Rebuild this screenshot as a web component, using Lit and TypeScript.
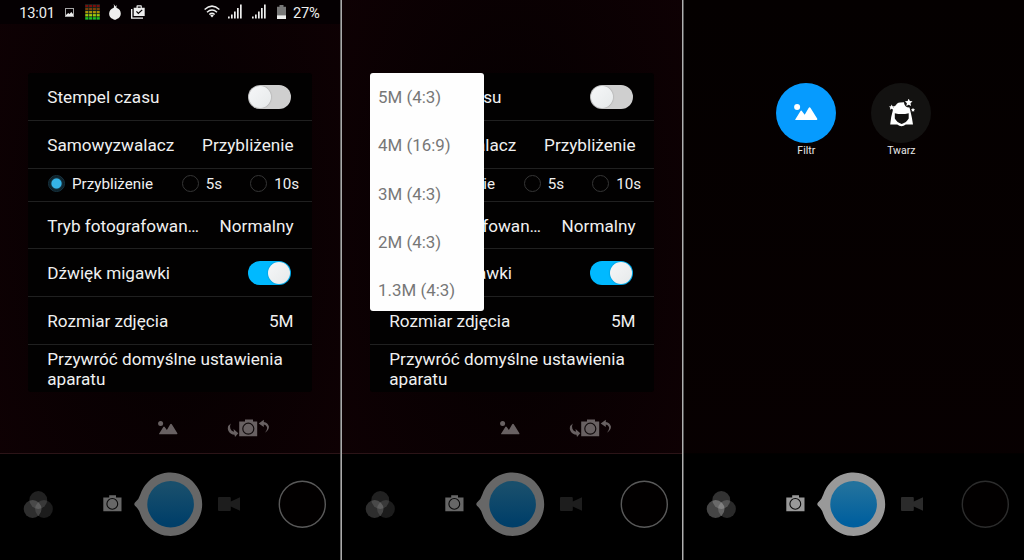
import { LitElement, html, css, svg, nothing } from "lit";
import { customElement, property } from "lit/decorators.js";

const mountain = svg`
  <circle cx="2.6" cy="2.5" r="2.5"></circle>
  <path d="M.9 13.1 5.3 6Q6 5 6.7 6L8.900 9 12.200 3.300Q13 2.200 13.800 3.300L19.400 12.300Q19.600 13.300 18.800 13.300H1.400Z"></path>`;

@customElement("toggle-switch")
class ToggleSwitch extends LitElement {
  @property({ type: Boolean, reflect: true }) on = false;
  static styles = css`
    :host { display: flex; box-sizing: border-box; width: 43px; height: 24px; padding: 1px; border-radius: 12px; background: #cfcfcf; }
    :host([on]) { background: #00b9ff; justify-content: flex-end; }
    .knob { width: 22px; height: 22px; border-radius: 50%; background: linear-gradient(135deg, #f6f7f8, #e6e9ea); box-shadow: 0 0 1.5px #0006; }
  `;
  render() { return html`<div class="knob"></div>`; }
}

@customElement("settings-card")
class SettingsCard extends LitElement {
  static styles = css`
    :host { display: block; }
    .card { width: 284px; border-radius: 3px; background: #020101; color: #f0f0f0; font-size: 17.15px; line-height: 20px; }
    .row { box-sizing: border-box; display: flex; align-items: center; justify-content: space-between; padding: 1px 18.5px 0 19.3px; height: 48px; border-bottom: 1px solid #202020; white-space: nowrap; }
    .short { height: 47px; }
    .radios { height: 33px; padding: 0 13px 3px 20px; justify-content: flex-start; font-size: 15.2px; }
    .last { height: 47px; border: 0; white-space: normal; padding-right: 14px; }
    .sw { padding-right: 21px; }
    .radio { flex: none; box-sizing: border-box; width: 17px; height: 17px; margin-right: 7px; border-radius: 50%; border: 1px solid #353535; }
    .radio.sel { border-color: #173543; background: radial-gradient(circle, #35b4e8 4.6px, #12303d 5.6px, #0c1b22 7.5px); }
    .lab { flex: none; }
    .l1 { width: 109.700px; } .l2 { width: 44.500px; }
  `;
  render() {
    return html`<div class="card">
      <div class="row sw"><span>Stempel czasu</span><toggle-switch></toggle-switch></div>
      <div class="row"><span>Samowyzwalacz</span><span>Przybliżenie</span></div>
      <div class="row radios">
        <i class="radio sel"></i><span class="lab l1">Przybliżenie</span>
        <i class="radio"></i><span class="lab l2">5s</span>
        <i class="radio"></i><span class="lab">10s</span>
      </div>
      <div class="row short"><span>Tryb fotografowan…</span><span>Normalny</span></div>
      <div class="row sw"><span>Dźwięk migawki</span><toggle-switch on></toggle-switch></div>
      <div class="row"><span>Rozmiar zdjęcia</span><span>5M</span></div>
      <div class="row last"><span>Przywróć domyślne ustawienia aparatu</span></div>
    </div>`;
  }
}

@customElement("camera-bar")
class CameraBar extends LitElement {
  @property({ type: Boolean, reflect: true }) lit = false;
  static styles = css`
    :host { display: flex; box-sizing: border-box; height: 107px; background: #000; border-top: 1px solid #2b1417; padding-bottom: 6px; align-items: center;
      --ring: #676767; --top: #194f6c; --bot: #003f69; --cam: #676767; --vid: #1d1d1d; --thumb: #595959; --venn: 1; }
    :host([lit]) { border-color: #020000; --ring: #999; --top: #22729d; --bot: #005f9e; --cam: #999; --vid: #2b2b2b; --thumb: #2c2c2c; --venn: 1.5; }
    svg { display: block; flex: none; }
    .venn { margin-left: 23px; fill: #fff; }
    .v1 { fill-opacity: calc(0.13 * var(--venn)); } .v2 { fill-opacity: calc(0.18 * var(--venn)); } .v3 { fill-opacity: calc(0.11 * var(--venn)); }
    .cam { margin-left: 48.500px; margin-bottom: 1px; fill: var(--cam); }
    .lens { fill: none; stroke: #0a0a0a; stroke-width: 1.1; }
    .shutter { margin-left: 12.500px; }
    .ring { fill: var(--ring); }
    .vid { margin-left: 15px; fill: var(--vid); }
    .thumb { margin-left: 38px; fill: #020000; stroke: var(--thumb); stroke-width: 1.4; }
    .s1 { stop-color: var(--top); } .s2 { stop-color: var(--bot); }
  `;
  render() {
    return html`
      <svg class="venn" width="31" height="28"><circle class="v1" cx="15.3" cy="10" r="8.9"></circle><circle class="v2" cx="9.6" cy="19" r="8.9"></circle><circle class="v3" cx="21" cy="19" r="8.9"></circle></svg>
      <svg class="cam" width="19" height="17"><path d="M.3 2.400H6.200V.2H13V2.400H18.500V16.200H.3Z"></path><circle class="lens" cx="9.300" cy="8.900" r="5.400"></circle></svg>
      <svg class="shutter" width="69" height="64">
        <defs><linearGradient id="g" x1="0" y1="0" x2="0" y2="1"><stop class="s1" offset=".1"></stop><stop class="s2" offset=".9"></stop></linearGradient></defs>
        <g transform="translate(-.6 .2)"><path class="ring" d="M1.600 30.400Q5.600 27 7 22A31.700 31.700 0 1 1 7 42Q5.600 37 1.600 33.600Q.2 32 1.600 30.400Z"></path>
        <circle cx="37.200" cy="32" r="23.300" fill="url(#g)"></circle></g>
      </svg>
      <svg class="vid" width="22" height="14"><path d="M1 0H11.800Q12.800 0 12.800 1V4.600L22 .2V13.800L12.800 9.400V13Q12.800 14 11.800 14H1Q0 14 0 13V1Q0 0 1 0Z"></path></svg>
      <svg class="thumb" width="48" height="48"><circle cx="24.300" cy="24.300" r="23"></circle></svg>`;
  }
}

@customElement("phone-status")
class PhoneStatus extends LitElement {
  static styles = css`
    :host { display: flex; align-items: center; height: 24px; box-sizing: border-box; padding: 0 0 0 19.200px; background: #050002; color: #eee; font-size: 14.700px; line-height: 24px; letter-spacing: -0.2px; }
    svg { display: block; flex: none; fill: #eee; }
    .time { width: 45.800px; padding-top: 1px; } .pct { padding-top: 1px; }
    .pic { margin-right: 11px; } .eq { margin-right: 9px; } .onion { margin-right: 10px; }
    .wifi { margin-left: 59px; margin-right: 8px; margin-bottom: 2px; } .sig { margin-right: 10px; margin-bottom: 2px; } .bat { margin-left: 1px; margin-right: 7px; }
    .wave { fill: none; stroke: #eee; stroke-width: 1.5; }
  `;
  bars() {
    return html`<svg class="sig" width="14" height="15">${[2, 4, 7, 10.5, 14].map((h, i) => svg`<rect x=${i * 3} y=${14.5 - h} width="1.7" height=${h}></rect>`)}</svg>`;
  }
  render() {
    const c = ["#7d0d0b", "#7a3c08", "#a99108", "#a5ca0a", "#1fc51f"];
    return html`
      <span class="time">13:01</span>
      <svg class="pic" width="9" height="9"><path fill-rule="evenodd" d="M0 0H9V9H0ZM1 1V8H8V1Z" fill="#a5a5a5"></path><path d="M1 7 3.200 5 4.500 6 6.300 4 8 6V8H1Z"></path></svg>
      <svg class="eq" width="15" height="16"><rect width="15" height="16" fill="#08231f"></rect>
        ${c.map((f, r) => [0, 1, 2, 3].map((x) => svg`<rect x=${0.3 + x * 3.8} y=${0.8 + r * 3.1} width="3" height="2.3" fill=${f}></rect>`))}</svg>
      <svg class="onion" width="12" height="16"><path d="M4.700 0Q5.600 1.400 6.400 2.600L7.600 1 7.400 3.800Q11.800 5.500 11.800 9.800 11.600 13.800 7.800 15L6.800 15.800H5L4 15Q.2 13.800.1 9.800.3 5.500 4.800 3.800 5.300 2 4.700 0Z"></path></svg>
      <svg width="14" height="14"><path fill-rule="evenodd" d="M2.700 2.800H5.500V1Q5.500.2 6.300.2H10Q10.800.2 10.800 1V2.800H13.700V11H2.700ZM6.700 1.400V2.800H9.700V1.400ZM5 6.800 7.300 9.200 11.600 5.300 10.800 4.400 7.300 7.500 5.900 5.900Z"></path><path d="M0 4H1.400V12.400H12V13.800H0Z"></path></svg>
      <svg class="wifi" width="16" height="13"><path class="wave" d="M.6 4.500Q8-2.200 15.400 4.500M3 7.200Q8 2.800 13 7.200M5.300 9.500Q8 7.200 10.700 9.500"></path><path d="M6.200 10.500Q8 9 9.800 10.500L8 12.600Z"></path></svg>
      ${this.bars()}${this.bars()}
      <svg class="bat" width="9" height="14"><path d="M0 1.700H2.500V0H6.500V1.700H9V14H0Z" fill="#777"></path><rect y="10.400" width="9" height="3.600"></rect></svg>
      <span class="pct">27%</span>`;
  }
}

@customElement("app-root")
class AppRoot extends LitElement {
  static styles = css`
    :host { display: flex; width: 1024px; height: 560px; overflow: hidden; background: #000; font-family: Roboto, "Noto Sans", sans-serif; }
    .phone { position: relative; flex: none; width: 340px; height: 560px; display: flex; flex-direction: column;
      background: radial-gradient(ellipse at 50% 40%, #060001 20%, #100104 100%); }
    .dark { background: linear-gradient(#040000, #080001); width: 341px; }
    .sep { flex: none; width: 2px; background: linear-gradient(90deg, #666 50%, #aaa 50%); }
    .sep.b { position: relative; z-index: 1; width: 1px; background: #b0b0b0; box-shadow: 1px 0 #555; }
    .status { height: 24px; }
    .card { margin: 49px 0 0 28px; }
    .tools { display: flex; align-items: center; margin: 27px 0 0 158px; height: 18px; gap: 49px; }
    .tools svg { fill: #686162; display: block; }
    .lens { fill: none; stroke: #120c0d; stroke-width: 1.2; }
    camera-bar { margin-top: auto; }
    .menu { position: absolute; left: 28px; top: 73px; width: 114px; height: 238px; box-sizing: border-box; padding: 0 8px; background: #fefefe; border-radius: 3px; color: #777; font-size: 16.900px; }
    .item { height: 48.250px; line-height: 49px; }
    .modes { display: flex; gap: 35px; margin: 83px 0 0 93.300px; }
    .mode { width: 60px; display: flex; flex-direction: column; align-items: center; color: #e8e8e8; font-size: 10.500px; line-height: 15px; }
    .disc { width: 60px; height: 60px; border-radius: 50%; background: #131211; display: flex; align-items: center; justify-content: center; }
    .blue { background: #069bfe; }
    .disc svg { fill: #fff; display: block; }
  `;
  phone(i: number, menu = false) {
    return html`<section class="phone">
      <div class="status">${i ? nothing : html`<phone-status></phone-status>`}</div>
      <settings-card class="card"></settings-card>
      <div class="tools">
        <svg width="20" height="14">${mountain}</svg>
        <svg width="43" height="18">
          <path d="M12.200 2.500H18V.5H26V2.500H30.200V17.300H12.200Z"></path><circle class="lens" cx="21.300" cy="9.700" r="5.500"></circle>
          <path d="M3.800 4.500Q2 8.500 4.500 11.500 5.800 12.600 7 12.700L6.500 10 11.300 14.300 8 18 7.500 15.700Q3.500 15.400 1.600 12.200-.8 7.500 3.800 4.500Z"></path>
          <path d="M36.800.8V2.900Q41 3.500 42 7.800 41.900 11.500 37.800 13.800 40.600 10.500 40 8 39 5.600 36.800 5.500V8L31.700 4.400Z"></path>
        </svg>
      </div>
      <camera-bar></camera-bar>
      ${menu ? html`<div class="menu">${["5M (4:3)", "4M (16:9)", "3M (4:3)", "2M (4:3)", "1.3M (4:3)"].map((t) => html`<div class="item">${t}</div>`)}</div>` : nothing}
    </section>`;
  }
  render() {
    return html`${this.phone(0)}<div class="sep"></div>${this.phone(1, true)}<div class="sep b"></div>
      <section class="phone dark">
        <div class="modes">
          <div class="mode"><div class="disc blue"><svg width="24" height="18" viewBox="0 0 20 15">${mountain}</svg></div>Filtr</div>
          <div class="mode"><div class="disc"><svg width="28" height="28">
            <path fill-rule="evenodd" d="M5.800 11.500Q5.500 7.500 9 6.200 9.500 4 13 3.500L17 3.300Q17.200 7 20.200 8.200L22.500 8.500 23.500 12.500Q25 18.500 26 25.500H18.800Q14.500 29 10.200 25.500H3.200Q3.800 18 5.800 11.500ZM7.800 14.200V19.500Q10 23.500 14.700 25 19.500 23.500 21.700 19.500V14.200Q14.500 16 7.800 14.200Z"></path>
            <path d="M21.700-.5 22.800 2 25.500 2.300 23.500 4.200 24.100 7 21.700 5.700 19.300 7 19.900 4.200 17.900 2.300 20.600 2ZM4.700 5.500 5.500 7.200 7.400 7.500 6 8.800 6.400 10.800 4.700 9.800 2.900 10.800 3.300 8.800 2 7.500 3.900 7.200ZM26 8.800 26.600 10.100 28 10.400 27 11.400 27.200 12.800 26 12.100 24.800 12.800 25 11.400 24 10.400 25.400 10.100Z"></path>
          </svg></div>Twarz</div>
        </div>
        <camera-bar lit></camera-bar>
      </section>`;
  }
}
